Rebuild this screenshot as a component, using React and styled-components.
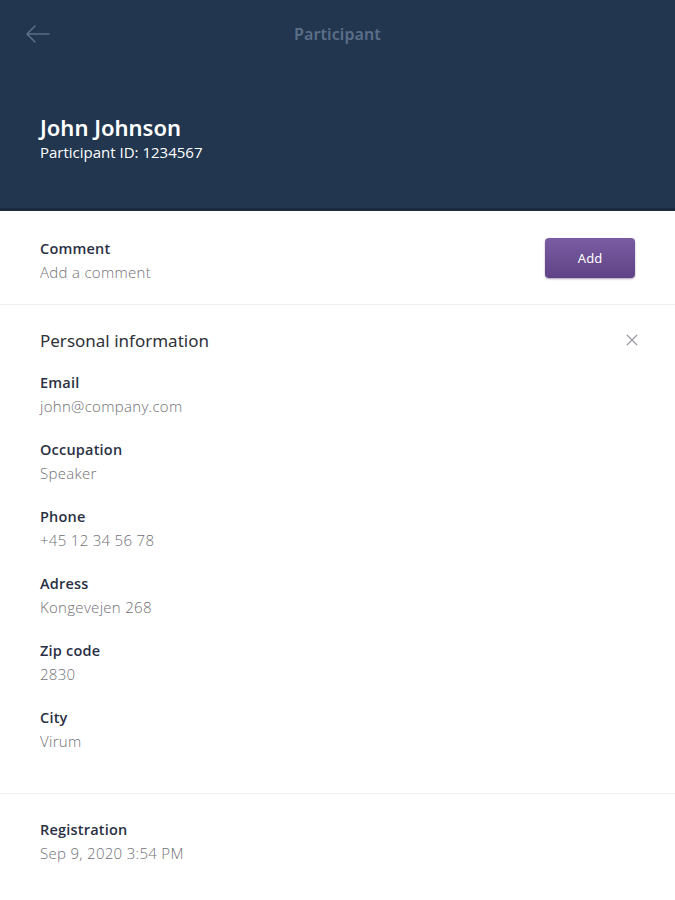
import React from 'react';
import styled, { createGlobalStyle } from 'styled-components';

const GlobalStyle = createGlobalStyle`
  html, body {
    margin: 0;
    padding: 0;
    background: #ffffff;
    font-family: 'Open Sans', 'Liberation Sans', sans-serif;
  }
`;

const Page = styled.div`
  width: 675px;
  min-height: 900px;
  background: #fff;
`;

const Header = styled.header`
  background: #22364f;
  height: 208px;
  border-bottom: 3px solid #1a2b40;
  padding: 0 40px;
  display: flex;
  flex-direction: column;
`;

const TopBar = styled.div`
  height: 68px;
  display: flex;
  align-items: center;
  position: relative;
  justify-content: center;
`;

const BackButton = styled.button`
  position: absolute;
  left: -16px;
  top: 21px;
  width: 28px;
  height: 26px;
  padding: 0;
  border: none;
  background: none;
  display: flex;
  align-items: center;
  justify-content: center;
`;

const Title = styled.h1`
  margin: 0;
  font-family: 'Noto Sans', sans-serif;
  font-size: 16px;
  font-weight: 600;
  color: #5b6e88;
  letter-spacing: 0.1px;
`;

const Identity = styled.div`
  margin-top: 44px;
  display: flex;
  flex-direction: column;
`;

const Name = styled.h2`
  margin: 0;
  font-family: 'Noto Sans', sans-serif;
  font-size: 22px;
  font-weight: 600;
  color: #ffffff;
  line-height: 30px;
`;

const SubId = styled.div`
  font-size: 15px;
  color: #ffffff;
  line-height: 20px;
`;

const Section = styled.section`
  padding: 0 40px;
  border-bottom: ${({ noBorder }) => (noBorder ? 'none' : '1px solid #eeeff1')};
`;

const CommentRow = styled.div`
  display: flex;
  align-items: center;
  justify-content: space-between;
  height: 93px;
`;

const CommentText = styled.div`
  margin-top: 6px;
`;

const Label = styled.div`
  font-size: 14.5px;
  font-weight: 600;
  color: #2a3043;
  line-height: 20px;
  letter-spacing: 0.2px;
`;

const Value = styled.div`
  font-size: 15px;
  font-weight: 300;
  color: #6f7075;
  line-height: 20px;
  margin-top: 3px;
  letter-spacing: 0.3px;
`;

const AddButton = styled.button`
  width: 90px;
  height: 40px;
  border: none;
  border-radius: 4px;
  background: linear-gradient(#7a5ca2, #5f4386);
  box-shadow: 0 1px 2px rgba(40, 20, 70, 0.4);
  color: #fff;
  font-family: 'Noto Sans', sans-serif;
  font-size: 13px;
`;

const SectionHead = styled.div`
  display: flex;
  justify-content: space-between;
  align-items: center;
  padding-top: 21px;
  height: 28px;
`;

const SectionTitle = styled.h3`
  margin: 0;
  font-family: 'Noto Sans', sans-serif;
  font-size: 17px;
  font-weight: 400;
  color: #2e3138;
`;

const CloseButton = styled.button`
  border: none;
  background: none;
  padding: 0;
  margin-right: -4px;
  display: flex;
`;

const FieldList = styled.div`
  display: flex;
  flex-direction: column;
  gap: 24px;
  padding: ${({ top }) => top}px 0 42px;
`;

const Field = styled.div``;

const fields = [
  ['Email', 'john@company.com'],
  ['Occupation', 'Speaker'],
  ['Phone', '+45 12 34 56 78'],
  ['Adress', 'Kongevejen 268'],
  ['Zip code', '2830'],
  ['City', 'Virum'],
];

export default function App() {
  return (
    <Page>
      <GlobalStyle />
      <Header>
        <TopBar>
          <BackButton aria-label="Back">
            <svg width="26" height="18" viewBox="0 0 26 18" fill="none" stroke="#5b6e88" strokeWidth="1.6" strokeLinecap="round" strokeLinejoin="round">
              <path d="M24 9H2M10 1L2 9l8 8" />
            </svg>
          </BackButton>
          <Title>Participant</Title>
        </TopBar>
        <Identity>
          <Name>John Johnson</Name>
          <SubId>Participant ID: 1234567</SubId>
        </Identity>
      </Header>

      <Section>
        <CommentRow>
          <CommentText>
            <Label>Comment</Label>
            <Value>Add a comment</Value>
          </CommentText>
          <AddButton>Add</AddButton>
        </CommentRow>
      </Section>

      <Section>
        <SectionHead>
          <SectionTitle>Personal information</SectionTitle>
          <CloseButton aria-label="Close">
            <svg width="14" height="14" viewBox="0 0 14 14" stroke="#9a9ca2" strokeWidth="1.3">
              <path d="M2 2l10 10M12 2L2 12" />
            </svg>
          </CloseButton>
        </SectionHead>
        <FieldList top={19}>
          {fields.map(([label, value]) => (
            <Field key={label}>
              <Label>{label}</Label>
              <Value>{value}</Value>
            </Field>
          ))}
        </FieldList>
      </Section>

      <Section noBorder>
        <FieldList top={26}>
          <Field>
            <Label>Registration</Label>
            <Value>Sep 9, 2020 3:54 PM</Value>
          </Field>
        </FieldList>
      </Section>
    </Page>
  );
}
